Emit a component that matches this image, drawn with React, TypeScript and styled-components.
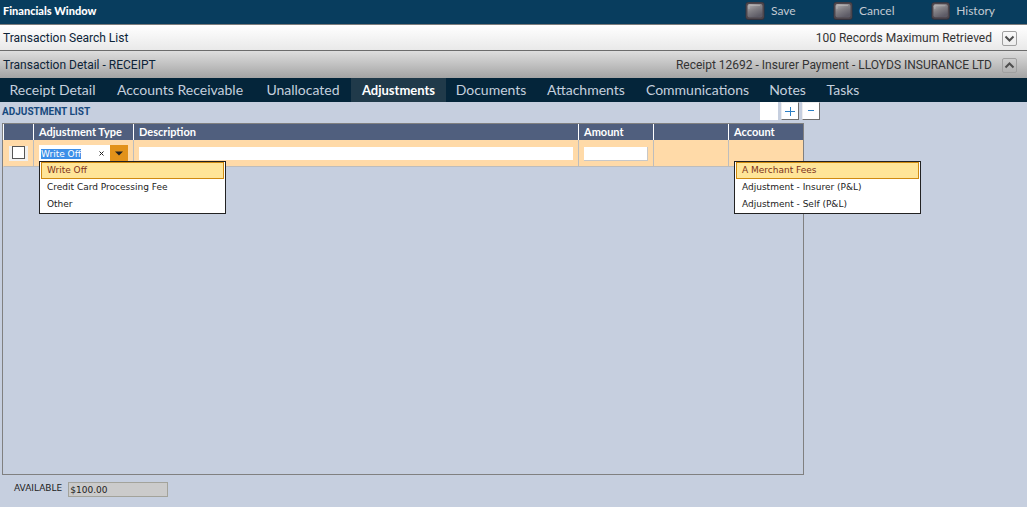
import React, { useEffect, useRef } from "react";
import styled, { createGlobalStyle } from "styled-components";

const GlobalStyle = createGlobalStyle`
  *, *::before, *::after { box-sizing: border-box; }
  body {
    margin: 0;
    background: #c6cfdf;
    font-family: "DejaVu Sans", sans-serif;
    font-size: 9px;
    color: #222;
  }
  button, input { font: inherit; color: inherit; }
`;

const TopBar = styled.header`
  display: flex;
  justify-content: space-between;
  height: 25px;
  padding: 0 32px 2px 3px;
  background: #083d5e;
  border-bottom: 1px solid #7c7c7c;
  font-family: Lato, sans-serif;
`;

const AppTitle = styled.h1`
  margin: 0;
  font-size: 11px;
  line-height: 21px;
  font-weight: 900;
  color: #fff;
`;

const Actions = styled.div`
  display: flex;
`;

const ActionButton = styled.button<{ $width: number }>`
  display: flex;
  align-items: center;
  gap: 6px;
  width: ${(p) => p.$width}px;
  padding: 0;
  border: 0;
  background: none;
  color: #c3cad2;
  font-size: 12px;
  line-height: 22px;
`;

const Band = styled.section<{ $active?: boolean }>`
  display: flex;
  align-items: center;
  justify-content: space-between;
  height: ${(p) => (p.$active ? 27 : 26)}px;
  padding: 0 10px 0 3px;
  background: ${(p) =>
    p.$active
      ? "linear-gradient(#dedede, #a4a4a4)"
      : "linear-gradient(#ffffff, #e9e9e9)"};
  border-bottom: ${(p) => (p.$active ? "0" : "1px solid #6c6c6c")};
  font-family: Roboto, sans-serif;
  font-size: 12px;
  line-height: 24px;
`;

const BandTitle = styled.h2`
  margin: 0;
  font-size: 12px;
  font-weight: 400;
  color: #0d2438;
`;

const BandInfo = styled.div`
  display: flex;
  align-items: center;
  gap: 10px;
  color: #333;
`;

const Toggle = styled.button`
  display: flex;
  align-items: center;
  justify-content: center;
  width: 15px;
  height: 15px;
  margin-top: 2px;
  padding: 0;
  border: 1px solid #a0a0a0;
  border-radius: 2px;
  background: transparent;
  color: #4e4e4e;
`;

const Tabs = styled.nav`
  display: flex;
  height: 24px;
  background: #04253a;
  font-family: Lato, sans-serif;
`;

const Tab = styled.a<{ $width: number; $active?: boolean }>`
  flex: 0 0 ${(p) => p.$width}px;
  text-align: center;
  white-space: nowrap;
  text-decoration: none;
  font-size: ${(p) => (p.$active ? 13 : 14)}px;
  line-height: 24px;
  font-weight: ${(p) => (p.$active ? 700 : 400)};
  color: ${(p) => (p.$active ? "#fff" : "#c5d0de")};
  background: ${(p) => (p.$active ? "#203a4a" : "transparent")};
`;

const Content = styled.main`
  max-width: 820px;
  padding: 0 16px 10px 2px;
`;

const ListBar = styled.div`
  display: flex;
  justify-content: space-between;
  height: 21px;
  margin-right: -16px;
`;

const ListTitle = styled.h3`
  margin: 0;
  font-family: Roboto, sans-serif;
  font-size: 10px;
  line-height: 20px;
  font-weight: 700;
  color: #17497d;
`;

const Tools = styled.div`
  display: flex;
  gap: 3px;
`;

const ToolButton = styled.button<{ $blank?: boolean }>`
  width: 18px;
  height: 18px;
  padding: 0;
  border: ${(p) => (p.$blank ? "0" : "1px solid #6e6e6e")};
  border-top-color: #eee;
  border-left-color: #eee;
  background: #fff;
  color: #2c7fc4;
  display: flex;
  align-items: center;
  justify-content: center;
`;

const Panel = styled.div`
  min-height: 352px;
  border: 1px solid #808080;
`;

const Table = styled.table`
  width: 100%;
  table-layout: fixed;
  border-collapse: separate;
  border-spacing: 0;
`;

const Col = styled.col<{ $width?: number }>`
  width: ${(p) => (p.$width ? `${p.$width}px` : "auto")};
`;

const HeadCell = styled.th`
  height: 16px;
  padding: 0 5px;
  border-left: 1px solid #fff;
  background: #505f7e;
  color: #fff;
  text-align: left;
  white-space: nowrap;
  font-family: Lato, sans-serif;
  font-size: 11px;
  line-height: 16px;
  font-weight: 700;
`;

const Cell = styled.td`
  position: relative;
  height: 27px;
  padding: 1px 5px 0;
  border-left: 1px solid #bdbdbd;
  border-bottom: 1px solid #bdbdbd;
  background: #ffdaa8;
  &:first-child { border-left-color: #ffdaa8; }
`;

const CheckWrap = styled.label`
  display: flex;
  justify-content: center;
  width: 19px;
  height: 15px;
  background: #f0f0f0;
`;

const Check = styled.input`
  appearance: none;
  width: 13px;
  height: 13px;
  margin: 0;
  border: 1px solid #555;
  background: #fff;
`;

const Combo = styled.div`
  display: flex;
  width: 89px;
  height: 17px;
  background: #fff;
`;

const ComboInput = styled.input`
  flex: 1;
  min-width: 0;
  padding: 0 0 0 2px;
  border: 0;
  outline: 0;
  background: transparent;
  caret-color: transparent;
  &::selection { background: rgba(58, 142, 232, 0.99); color: #fff; }
`;

const ComboButton = styled.button<{ $arrow?: boolean }>`
  display: flex;
  align-items: center;
  justify-content: center;
  width: 18px;
  padding: 0;
  border: 0;
  background: ${(p) => (p.$arrow ? "#e2921a" : "transparent")};
  color: #222;
`;

const Field = styled.input<{ $sunken?: boolean }>`
  display: block;
  width: 100%;
  height: ${(p) => (p.$sunken ? 14 : 13)}px;
  padding: 0 2px;
  border: 0 solid #c8c8c8;
  border-width: ${(p) => (p.$sunken ? "0 1px 1px 0" : "0")};
  background: #fff;
`;

const Menu = styled.ul`
  position: absolute;
  z-index: 1;
  top: 21px;
  left: 5px;
  width: 187px;
  margin: 0;
  padding: 0 1px;
  border: 1px solid #222;
  background: #fff;
  list-style: none;
`;

const Option = styled.li<{ $selected?: boolean }>`
  height: 17px;
  padding: 0 5px;
  border: 1px solid ${(p) => (p.$selected ? "#cf8a10" : "transparent")};
  background: ${(p) => (p.$selected ? "#ffe598" : "transparent")};
  color: ${(p) => (p.$selected ? "#7c3220" : "#222")};
  line-height: 15px;
  white-space: nowrap;
`;

const Footer = styled.div`
  display: flex;
  gap: 6px;
  padding: 7px 0 0 12px;
`;

const FooterLabel = styled.label`
  line-height: 12px;
`;

const Total = styled.input`
  width: 100px;
  height: 15px;
  padding: 0 1px;
  border: 1px solid #a3a39b;
  background: #cbcbcb;
`;

function Orb() {
  return (
    <svg width="20" height="20" viewBox="0 0 20 20" aria-hidden="true">
      <defs>
        <linearGradient id="orb" x1="0" y1="0" x2="0.5" y2="1">
          <stop offset="0" stopColor="#b5b3b5" />
          <stop offset="0.5" stopColor="#828085" />
          <stop offset="1" stopColor="#5d5b66" />
        </linearGradient>
      </defs>
      <rect x="0.5" y="1" width="19" height="18" rx="3" fill="#34323c" />
      <rect x="1" y="1.5" width="18" height="16.5" rx="2.5" fill="#4d464c" />
      <rect x="2.5" y="3" width="15" height="13.5" rx="2" fill="url(#orb)" />
      <path d="M4 8V5.5Q4 4.5 5.5 4.5H15" fill="none" stroke="#c4c1c0" strokeOpacity="0.5" />
    </svg>
  );
}

function Chevron({ up }: { up?: boolean }) {
  return (
    <svg width="11" height="9" viewBox="0 0 11 9" aria-hidden="true">
      <path
        d={up ? "M1.5 6.5 5.5 2.5 9.5 6.5" : "M1.5 2.5 5.5 6.5 9.5 2.5"}
        fill="none"
        stroke="currentColor"
        strokeWidth="2"
      />
    </svg>
  );
}

const actions = [
  { label: "Save", width: 88 },
  { label: "Cancel", width: 98 },
  { label: "History", width: 64 },
];

const tabs = [
  { label: "Receipt Detail", width: 105 },
  { label: "Accounts Receivable", width: 150 },
  { label: "Unallocated", width: 96 },
  { label: "Adjustments", width: 95 },
  { label: "Documents", width: 90 },
  { label: "Attachments", width: 100 },
  { label: "Communications", width: 123 },
  { label: "Notes", width: 57 },
  { label: "Tasks", width: 54 },
];

function OptionMenu({ label, options }: { label: string; options: string[] }) {
  return (
    <Menu role="listbox" aria-label={label}>
      {options.map((option, i) => (
        <Option key={option} role="option" aria-selected={i === 0} $selected={i === 0}>
          {option}
        </Option>
      ))}
    </Menu>
  );
}

export default function App() {
  const typeInput = useRef<HTMLInputElement>(null);

  useEffect(() => {
    typeInput.current?.focus();
    typeInput.current?.select();
  }, []);

  return (
    <>
      <GlobalStyle />
      <TopBar>
        <AppTitle>Financials Window</AppTitle>
        <Actions>
          {actions.map((action) => (
            <ActionButton key={action.label} type="button" $width={action.width}>
              <Orb />
              {action.label}
            </ActionButton>
          ))}
        </Actions>
      </TopBar>
      <Band>
        <BandTitle>Transaction Search List</BandTitle>
        <BandInfo>
          100 Records Maximum Retrieved
          <Toggle type="button" aria-label="Expand">
            <Chevron />
          </Toggle>
        </BandInfo>
      </Band>
      <Band $active>
        <BandTitle>Transaction Detail - RECEIPT</BandTitle>
        <BandInfo>
          Receipt 12692 - Insurer Payment - LLOYDS INSURANCE LTD
          <Toggle type="button" aria-label="Collapse">
            <Chevron up />
          </Toggle>
        </BandInfo>
      </Band>
      <Tabs>
        {tabs.map((tab) => (
          <Tab key={tab.label} href="#" $width={tab.width} $active={tab.label === "Adjustments"}>
            {tab.label}
          </Tab>
        ))}
      </Tabs>
      <Content>
        <ListBar>
          <ListTitle>ADJUSTMENT LIST</ListTitle>
          <Tools>
            <ToolButton type="button" aria-label="Blank" $blank />
            <ToolButton type="button" aria-label="Add">
              <svg width="10" height="10" viewBox="0 0 10 10" aria-hidden="true">
                <path d="M0 5.5H10M5.5 1V10" stroke="currentColor" />
              </svg>
            </ToolButton>
            <ToolButton type="button" aria-label="Remove">
              <svg width="10" height="10" viewBox="0 0 10 10" aria-hidden="true">
                <path d="M2 4.5H8" stroke="currentColor" />
              </svg>
            </ToolButton>
          </Tools>
        </ListBar>
        <Panel>
          <Table>
            <colgroup>
              <Col $width={30} />
              <Col $width={100} />
              <Col />
              <Col $width={75} />
              <Col $width={75} />
              <Col $width={75} />
            </colgroup>
            <thead>
              <tr>
                <HeadCell />
                <HeadCell>Adjustment Type</HeadCell>
                <HeadCell>Description</HeadCell>
                <HeadCell>Amount</HeadCell>
                <HeadCell />
                <HeadCell>Account</HeadCell>
              </tr>
            </thead>
            <tbody>
              <tr>
                <Cell>
                  <CheckWrap>
                    <Check type="checkbox" aria-label="Select row" />
                  </CheckWrap>
                </Cell>
                <Cell>
                  <Combo>
                    <ComboInput ref={typeInput} aria-label="Adjustment Type" defaultValue="Write Off" />
                    <ComboButton type="button" aria-label="Clear">
                      <svg width="5" height="5" viewBox="0 0 5 5" aria-hidden="true">
                        <path d="M0.5 0.5 4.5 4.5M4.5 0.5 0.5 4.5" stroke="currentColor" />
                      </svg>
                    </ComboButton>
                    <ComboButton type="button" aria-label="Open" $arrow>
                      <svg width="8" height="5" viewBox="0 0 8 5" aria-hidden="true">
                        <path d="M0 0.5H8L4 4.5Z" fill="currentColor" />
                      </svg>
                    </ComboButton>
                  </Combo>
                  <OptionMenu
                    label="Adjustment Type"
                    options={["Write Off", "Credit Card Processing Fee", "Other"]}
                  />
                </Cell>
                <Cell>
                  <Field aria-label="Description" />
                </Cell>
                <Cell>
                  <Field aria-label="Amount" $sunken />
                </Cell>
                <Cell />
                <Cell>
                  <OptionMenu
                    label="Account"
                    options={["A Merchant Fees", "Adjustment - Insurer (P&L)", "Adjustment - Self (P&L)"]}
                  />
                </Cell>
              </tr>
            </tbody>
          </Table>
        </Panel>
        <Footer>
          <FooterLabel htmlFor="available">AVAILABLE</FooterLabel>
          <Total id="available" readOnly value="$100.00" />
        </Footer>
      </Content>
    </>
  );
}
